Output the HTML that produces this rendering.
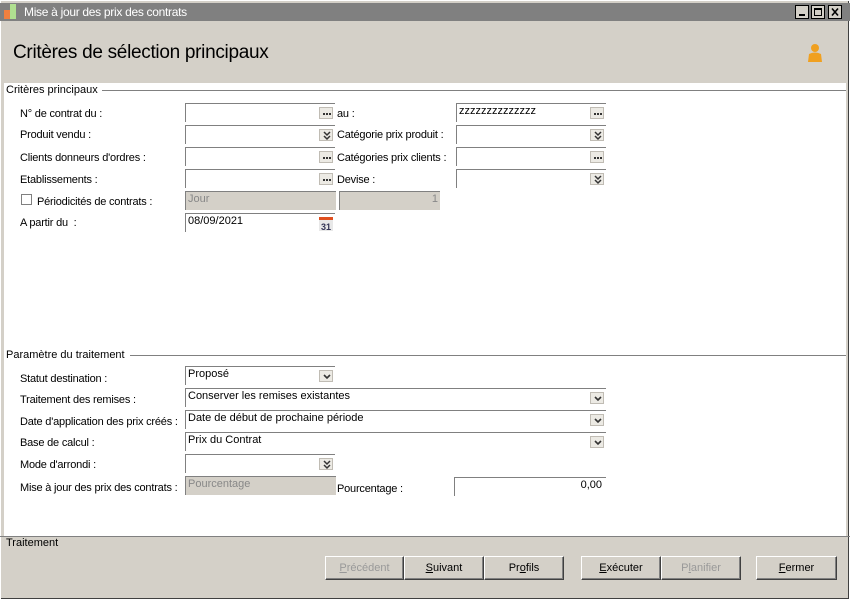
<!DOCTYPE html><html><head><style>
body{margin:0;width:850px;height:600px;overflow:hidden;background:#d4d0c8;font-family:"Liberation Sans",sans-serif;font-size:11px;color:#000;position:relative}
.a{position:absolute}
.tb{left:0;top:3px;width:850px;height:18px;background:#808080;color:#fff;font-size:12px}
.f{position:absolute;height:19px;background:#fff;border-top:1px solid #808080;border-left:1px solid #808080;box-sizing:border-box;padding:1px 2px;font-size:11px}
.f.d{background:#d4d0c8;color:#888}
.l{position:absolute;font-size:11px;letter-spacing:-.2px}
.bt{position:absolute;width:14px;height:12px;right:2px;top:3px;background:#eceae4;border:1px solid #c0bcb4;box-sizing:border-box}
.bt svg{position:absolute;left:0;top:0}
.btn{position:absolute;top:556px;height:24px;background:#d4d0c8;border:1px solid;border-color:#fff #404040 #404040 #fff;box-shadow:inset -1px -1px #808080;box-sizing:border-box;text-align:center;line-height:22px;font-size:11px}
.dis{color:#999}
.sec{position:absolute;font-size:11px}
.hr{position:absolute;height:1px;background:#808080;border-bottom:1px solid #fff}
</style></head><body>
<div class="a" style="left:0;top:0;width:850px;height:600px;border:1px solid #fff;box-sizing:border-box;box-shadow:inset -1px -1px #404040"></div>
<div class="a tb"><div class="a" style="left:4px;top:7px;width:6px;height:9px;background:#f08040"></div><div class="a" style="left:10px;top:1px;width:6px;height:15px;background:#b0e090"></div><span class="a" style="left:24px;top:2px;letter-spacing:-.3px">Mise à jour des prix des contrats</span>
<svg class="a" style="left:795px;top:2px" width="48" height="14"><rect x="0.5" y="0.5" width="13" height="13" fill="#d4d0c8" stroke="#000"/><rect x="4" y="9" width="6" height="2" fill="#000"/><rect x="16.5" y="0.5" width="13" height="13" fill="#d4d0c8" stroke="#000"/><rect x="19.5" y="3.5" width="7" height="7" fill="none" stroke="#000"/><rect x="19" y="3" width="8" height="2" fill="#000"/><rect x="33.5" y="0.5" width="13" height="13" fill="#d4d0c8" stroke="#000"/><path d="M37 3.5L43 10.5M43 3.5L37 10.5" stroke="#000" stroke-width="1.6"/></svg></div>
<div class="a" style="left:13px;top:42px;font-size:19px;letter-spacing:-.3px">Critères de sélection principaux</div>
<svg class="a" style="left:806px;top:43px" width="18" height="22"><circle cx="9" cy="5" r="4" fill="#f0a020"/><path d="M3 11 Q9 8 15 11 L16 19 L2 19Z" fill="#f0a020"/></svg>
<div class="a" style="left:4px;top:83px;width:842px;height:453px;background:#fff"></div>
<div class="a" style="left:0;top:536px;width:850px;height:1px;background:#808080"></div>
<div class="sec" style="left:6px;top:84px">Critères principaux</div><div class="hr" style="left:102px;top:90px;width:744px"></div>
<div class="l" style="left:20px;top:108px">N° de contrat du :</div><div class="f" style="left:185px;top:103px;width:150px"><div class="bt"><svg width="14" height="12"><path d="M3 6h2M6 6h2M9 6h2" stroke="#333" stroke-width="2"/></svg></div></div>
<div class="l" style="left:337px;top:108px">au :</div><div class="f" style="left:456px;top:103px;width:150px">zzzzzzzzzzzzzz<div class="bt"><svg width="14" height="12"><path d="M3 6h2M6 6h2M9 6h2" stroke="#333" stroke-width="2"/></svg></div></div>
<div class="l" style="left:20px;top:129px">Produit vendu :</div><div class="f" style="left:185px;top:125px;width:150px"><div class="bt"><svg width="14" height="12"><path d="M4 2l3 3 3-3M4 6l3 3 3-3" fill="none" stroke="#333" stroke-width="1.5"/></svg></div></div>
<div class="l" style="left:337px;top:129px">Catégorie prix produit :</div><div class="f" style="left:456px;top:125px;width:150px"><div class="bt"><svg width="14" height="12"><path d="M4 2l3 3 3-3M4 6l3 3 3-3" fill="none" stroke="#333" stroke-width="1.5"/></svg></div></div>
<div class="l" style="left:20px;top:152px">Clients donneurs d'ordres :</div><div class="f" style="left:185px;top:147px;width:150px"><div class="bt"><svg width="14" height="12"><path d="M3 6h2M6 6h2M9 6h2" stroke="#333" stroke-width="2"/></svg></div></div>
<div class="l" style="left:337px;top:152px">Catégories prix clients :</div><div class="f" style="left:456px;top:147px;width:150px"><div class="bt"><svg width="14" height="12"><path d="M3 6h2M6 6h2M9 6h2" stroke="#333" stroke-width="2"/></svg></div></div>
<div class="l" style="left:20px;top:174px">Etablissements :</div><div class="f" style="left:185px;top:169px;width:150px"><div class="bt"><svg width="14" height="12"><path d="M3 6h2M6 6h2M9 6h2" stroke="#333" stroke-width="2"/></svg></div></div>
<div class="l" style="left:337px;top:174px">Devise :</div><div class="f" style="left:456px;top:169px;width:150px"><div class="bt"><svg width="14" height="12"><path d="M4 2l3 3 3-3M4 6l3 3 3-3" fill="none" stroke="#333" stroke-width="1.5"/></svg></div></div>
<div class="a" style="left:21px;top:194px;width:11px;height:11px;border:1px solid #808080;box-sizing:border-box;background:#fff"></div>
<div class="l" style="left:37px;top:196px">Périodicités de contrats :</div><div class="f d" style="left:185px;top:191px;width:151px">Jour</div><div class="f d" style="left:339px;top:191px;width:101px;text-align:right">1</div>
<div class="l" style="left:20px;top:217px">A partir du&nbsp; :</div><div class="f" style="left:185px;top:213px;width:150px">08/09/2021<svg class="a" style="right:2px;top:3px" width="14" height="14"><rect x="0" y="0" width="14" height="14" fill="#e8e8e8"/><rect x="0" y="0" width="14" height="3" fill="#e05020"/><text x="7" y="13" font-size="9" font-weight="bold" fill="#335" text-anchor="middle" font-family="Liberation Sans">31</text></svg></div>
<div class="sec" style="left:6px;top:349px">Paramètre du traitement</div><div class="hr" style="left:130px;top:355px;width:716px"></div>
<div class="l" style="left:20px;top:373px">Statut destination :</div><div class="f" style="left:185px;top:366px;width:150px">Proposé<div class="bt"><svg width="14" height="12"><path d="M4 4l3 3 3-3" fill="none" stroke="#333" stroke-width="1.6"/></svg></div></div>
<div class="l" style="left:20px;top:394px">Traitement des remises :</div><div class="f" style="left:185px;top:388px;width:421px">Conserver les remises existantes<div class="bt"><svg width="14" height="12"><path d="M4 4l3 3 3-3" fill="none" stroke="#333" stroke-width="1.6"/></svg></div></div>
<div class="l" style="left:20px;top:416px">Date d'application des prix créés :</div><div class="f" style="left:185px;top:410px;width:421px">Date de début de prochaine période<div class="bt"><svg width="14" height="12"><path d="M4 4l3 3 3-3" fill="none" stroke="#333" stroke-width="1.6"/></svg></div></div>
<div class="l" style="left:20px;top:437px">Base de calcul :</div><div class="f" style="left:185px;top:432px;width:421px">Prix du Contrat<div class="bt"><svg width="14" height="12"><path d="M4 4l3 3 3-3" fill="none" stroke="#333" stroke-width="1.6"/></svg></div></div>
<div class="l" style="left:20px;top:459px">Mode d'arrondi :</div><div class="f" style="left:185px;top:454px;width:150px"><div class="bt"><svg width="14" height="12"><path d="M4 2l3 3 3-3M4 6l3 3 3-3" fill="none" stroke="#333" stroke-width="1.5"/></svg></div></div>
<div class="l" style="left:20px;top:482px">Mise à jour des prix des contrats :</div><div class="f d" style="left:185px;top:476px;width:151px">Pourcentage</div>
<div class="l" style="left:337px;top:483px">Pourcentage :</div><div class="f" style="left:454px;top:477px;width:152px;text-align:right;padding-right:4px">0,00</div>
<div class="sec" style="left:6px;top:537px">Traitement</div>
<div class="btn dis" style="left:325px;width:79px"><u>P</u>récédent</div>
<div class="btn" style="left:404px;width:80px"><u>S</u>uivant</div>
<div class="btn" style="left:484px;width:80px">Pr<u>o</u>fils</div>
<div class="btn" style="left:581px;width:80px"><u>E</u>xécuter</div>
<div class="btn dis" style="left:661px;width:80px">P<u>l</u>anifier</div>
<div class="btn" style="left:756px;width:81px"><u>F</u>ermer</div>
</body></html>
